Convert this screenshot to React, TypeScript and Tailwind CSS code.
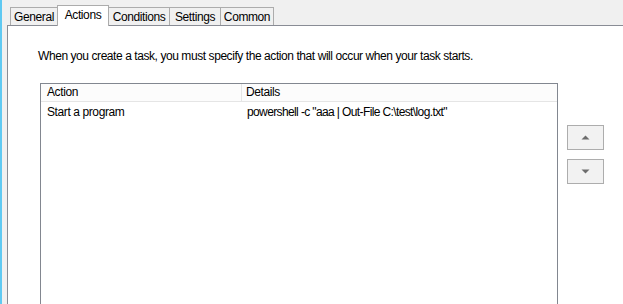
import React from 'react';

const tabs = [
  { label: 'General', w: 'w-[48px]' },
  { label: 'Actions', w: 'w-[52px]', active: true },
  { label: 'Conditions', w: 'w-[62px]' },
  { label: 'Settings', w: 'w-[52px]' },
  { label: 'Common', w: 'w-[54px]' },
];

const ArrowButton: React.FC<{ up?: boolean }> = ({ up }) => (
  <button className="w-[37px] h-[25px] bg-[#f2f2f2] border border-[#adadad] flex items-center justify-center">
    <svg width="9" height="5" viewBox="0 0 9 5">
      {up ? (
        <polygon points="0.5,4.5 8.5,4.5 4.5,0.5" fill="#6d6d6d" />
      ) : (
        <polygon points="0.5,0.5 8.5,0.5 4.5,4.5" fill="#6d6d6d" />
      )}
    </svg>
  </button>
);

export default function App() {
  return (
    <div
      className="w-[623px] h-[304px] bg-[#f0f0f0] flex overflow-hidden text-[12px] text-black tracking-[-0.4px]"
      style={{ fontFamily: '"Liberation Sans", Arial, sans-serif' }}
    >
      {/* window edge */}
      <div className="w-[2px] bg-[#5fc9f2] shrink-0" />
      <div className="w-[5px] shrink-0" />

      <div className="flex-1 flex flex-col">
        {/* Tab strip */}
        <div className="flex items-end pt-[5px] pl-[3px]">
          {tabs.map((t, i) =>
            t.active ? (
              <div
                key={t.label}
                className={`${t.w} h-[21px] -mb-px -ml-px relative z-10 bg-white border-t border-x border-[#acacac] flex items-center justify-center pb-[2px]`}
              >
                {t.label}
              </div>
            ) : (
              <div
                key={t.label}
                className={`${t.w} h-[18px] ${i > 0 ? '-ml-px' : ''} bg-[#f0f0f0] border-t border-x border-[#acacac] flex items-center justify-center`}
              >
                {t.label}
              </div>
            )
          )}
        </div>

        {/* Panel */}
        <div className="flex-1 bg-white border-t border-l border-[#898c95] flex flex-col">
          <div className="ml-[30px] mt-[23px] leading-[15px] tracking-[-0.43px]">
            When you create a task, you must specify the action that will occur when your task starts.
          </div>

          <div className="flex ml-[32px] mt-[19px] flex-1">
            {/* List */}
            <div className="w-[518px] border-t border-x border-[#828790] bg-white flex flex-col">
              <div className="flex h-[18px] bg-[#fcfcfc] border-b border-[#e5e5e5] leading-[17px]">
                <div className="w-[201px] pl-[6px] border-r border-[#e5e5e5]">Action</div>
                <div className="pl-[4px]">Details</div>
              </div>
              <div className="flex h-[19px] items-center">
                <div className="w-[201px] pl-[6px]">Start a program</div>
                <div className="pl-[5px] tracking-[-0.62px]">powershell -c "aaa | Out-File C:\test\log.txt"</div>
              </div>
            </div>

            {/* Move buttons */}
            <div className="ml-[9px] mt-[42px] flex flex-col gap-[9px]">
              <ArrowButton up />
              <ArrowButton />
            </div>
          </div>
        </div>
      </div>
    </div>
  );
}
